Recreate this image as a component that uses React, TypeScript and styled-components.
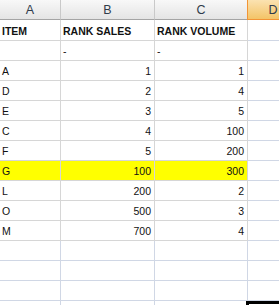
import React from "react";
import styled, { createGlobalStyle, css } from "styled-components";

const GlobalStyle = createGlobalStyle`
  html, body {
    margin: 0;
    padding: 0;
    background: #ffffff;
    overflow: hidden;
  }
  body {
    font-family: "Liberation Sans", Arial, sans-serif;
  }
`;

const Sheet = styled.div`
  display: grid;
  grid-template-columns: 61px 94px 93px 50px;
  width: 279px;
  height: 305px;
  overflow: hidden;
  font-size: 10.5px;
  color: #111111;
`;

const HeadCell = styled.div<{ $active?: boolean }>`
  height: 19px;
  display: flex;
  align-items: center;
  justify-content: center;
  font-size: 12.5px;
  color: #2f3b4a;
  background: linear-gradient(#f8f8f8, #e4e4e4);
  border-right: 1px solid #c9c9c9;
  border-bottom: 1px solid #a4a4a4;
  ${(p) =>
    p.$active &&
    css`
      background: linear-gradient(#fbe2b1, #f3c467);
      border-left: 1px solid #f29436;
      margin-left: -1px;
      border-bottom-color: #f29436;
      border-right: none;
    `}
`;

const Cell = styled.div<{
  $right?: boolean;
  $bold?: boolean;
  $fill?: boolean;
  $plain?: boolean;
  $tall?: boolean;
  $selected?: boolean;
}>`
  position: relative;
  display: flex;
  align-items: flex-end;
  justify-content: ${(p) => (p.$right ? "flex-end" : "flex-start")};
  padding: 0 3px 3px 2px;
  box-sizing: border-box;
  height: ${(p) => (p.$tall ? 21 : 20)}px;
  line-height: 12px;
  font-weight: ${(p) => (p.$bold ? 700 : 400)};
  white-space: nowrap;
  background: ${(p) => (p.$fill ? "#ffff00" : "#ffffff")};
  border-right: 1px solid ${(p) => (p.$plain ? "#d0d7e5" : "#d6d6d6")};
  border-bottom: 1px solid ${(p) => (p.$plain ? "#d0d7e5" : "#d6d6d6")};
  ${(p) =>
    p.$selected &&
    css`
      &::after {
        content: "";
        position: absolute;
        left: -2px;
        top: 0;
        width: 60px;
        height: 30px;
        border-top: 3px solid #000000;
        border-left: 3px solid #000000;
      }
    `}
`;

type Row = { item: string; sales: string; volume: string; mark?: boolean };

const rows: Row[] = [
  { item: "", sales: "-", volume: "-" },
  { item: "A", sales: "1", volume: "1" },
  { item: "D", sales: "2", volume: "4" },
  { item: "E", sales: "3", volume: "5" },
  { item: "C", sales: "4", volume: "100" },
  { item: "F", sales: "5", volume: "200" },
  { item: "G", sales: "100", volume: "300", mark: true },
  { item: "L", sales: "200", volume: "2" },
  { item: "O", sales: "500", volume: "3" },
  { item: "M", sales: "700", volume: "4" },
];

const App = () => {
  return (
    <>
      <GlobalStyle />
      <Sheet>
        <HeadCell>A</HeadCell>
        <HeadCell>B</HeadCell>
        <HeadCell>C</HeadCell>
        <HeadCell $active>D</HeadCell>

        <Cell $bold $tall>ITEM</Cell>
        <Cell $bold $tall>RANK SALES</Cell>
        <Cell $bold $tall>RANK VOLUME</Cell>
        <Cell $plain $tall />

        {rows.map((r, i) => (
          <React.Fragment key={i}>
            <Cell $fill={r.mark}>{r.item}</Cell>
            <Cell $fill={r.mark} $right={r.sales !== "-"}>
              {r.sales}
            </Cell>
            <Cell $fill={r.mark} $right={r.volume !== "-"}>
              {r.volume}
            </Cell>
            <Cell $plain />
          </React.Fragment>
        ))}

        {[0, 1, 2, 3].map((i) => (
          <React.Fragment key={"e" + i}>
            <Cell $plain />
            <Cell $plain />
            <Cell $plain />
            <Cell $plain $selected={i === 3} />
          </React.Fragment>
        ))}
      </Sheet>
    </>
  );
};

export default App;
